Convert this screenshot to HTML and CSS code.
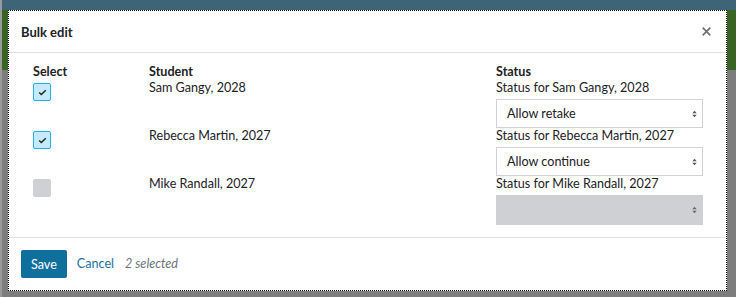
FILE: index.html
```html
<!DOCTYPE html>
<html lang="en">
<head>
    <meta charset="UTF-8">
    <title>Bulk edit</title>
    <link rel="stylesheet" href="styles.css">
</head>
<body>
    <div class="modal">
        <div class="modal-header">
            <h5>Bulk edit</h5>
            <button class="close" aria-label="Close">
                <svg width="9" height="9" viewBox="0 0 9 9"><path d="M0.7 0.7L8.3 8.3M8.3 0.7L0.7 8.3" stroke="#6a737b" stroke-width="1.7" fill="none"/></svg>
            </button>
        </div>
        <div class="modal-body">
            <div class="grid">
                <div class="th">Select</div>
                <div class="th">Student</div>
                <div class="th">Status</div>

                <div class="cell"><span class="check on"><svg width="9" height="7" viewBox="0 0 9 7"><path d="M1.2 3.6L3.3 5.5L7.8 1.2" stroke="#1d2125" stroke-width="1.4" fill="none"/></svg></span></div>
                <div class="cell name">Sam Gangy, 2028</div>
                <div class="cell">
                    <div class="label">Status for Sam Gangy, 2028</div>
                    <div class="select"><span>Allow retake</span><svg width="5" height="8" viewBox="0 0 5 8"><path d="M0.3 3.2L2.5 0.7L4.7 3.2ZM0.3 4.8L2.5 7.3L4.7 4.8Z" fill="#555"/></svg></div>
                </div>

                <div class="cell"><span class="check on"><svg width="9" height="7" viewBox="0 0 9 7"><path d="M1.2 3.6L3.3 5.5L7.8 1.2" stroke="#1d2125" stroke-width="1.4" fill="none"/></svg></span></div>
                <div class="cell name">Rebecca Martin, 2027</div>
                <div class="cell">
                    <div class="label">Status for Rebecca Martin, 2027</div>
                    <div class="select"><span>Allow continue</span><svg width="5" height="8" viewBox="0 0 5 8"><path d="M0.3 3.2L2.5 0.7L4.7 3.2ZM0.3 4.8L2.5 7.3L4.7 4.8Z" fill="#555"/></svg></div>
                </div>

                <div class="cell"><span class="check off"></span></div>
                <div class="cell name">Mike Randall, 2027</div>
                <div class="cell">
                    <div class="label">Status for Mike Randall, 2027</div>
                    <div class="select disabled"><span></span><svg width="5" height="8" viewBox="0 0 5 8"><path d="M0.3 3.2L2.5 0.7L4.7 3.2ZM0.3 4.8L2.5 7.3L4.7 4.8Z" fill="#666"/></svg></div>
                </div>
            </div>
        </div>
        <div class="modal-footer">
            <button class="btn-save">Save</button>
            <a class="cancel" href="#">Cancel</a>
            <span class="count">2 selected</span>
        </div>
    </div>
</body>
</html>
```

FILE: styles.css
```css
body {
    margin: 0;
    height: 297px;
    overflow: hidden;
    font-family: 'Lato', 'Noto Sans', sans-serif;
    font-size: 12.6px;
    color: #1d2125;
    background:
        linear-gradient(to right, #9a9a9a 0 2px, transparent 2px),
        linear-gradient(to bottom, #3e6478 0 10px, #3a6424 10px 70px, #7d7d7d 70px);
}

.modal {
    box-sizing: border-box;
    width: 719px;
    height: 281px;
    margin: 10px 0 0 8px;
    background: #fff;
    border: 1px dotted #000;
    display: flex;
    flex-direction: column;
}

.modal-header {
    height: 41px;
    display: flex;
    align-items: center;
    justify-content: space-between;
    padding: 0 15px 0 12px;
    border-bottom: 1px solid #dee2e6;
}

.modal-header h5 {
    margin: 0;
    font-size: 13px;
    font-weight: bold;
}

.close {
    border: none;
    background: none;
    padding: 0;
    width: 9px;
    height: 9px;
    display: flex;
}

.modal-body {
    padding: 11px 24px 13px;
    border-bottom: 1px solid #dee2e6;
}

.grid {
    display: grid;
    grid-template-columns: 116px 347px 207px;
}

.th {
    font-weight: bold;
    line-height: 16px;
}

.cell {
    height: 48px;
    line-height: 16px;
}

.check {
    box-sizing: border-box;
    width: 18px;
    height: 18px;
    margin-top: 3px;
    border-radius: 2px;
    display: flex;
    align-items: center;
    justify-content: center;
}

.check.on {
    background: #c4eafb;
    border: 1px solid #23b1ea;
}

.check.off {
    background: #cfd0d4;
}

.select {
    box-sizing: border-box;
    height: 29px;
    margin-top: 3px;
    border: 1px solid #cfd2d6;
    padding: 0 5px 0 10px;
    display: flex;
    align-items: center;
    justify-content: space-between;
}

.select.disabled {
    background: #cfd0d4;
    border-color: #cfd0d4;
    height: 30px;
}

.modal-footer {
    flex: 1;
    display: flex;
    align-items: flex-start;
    padding: 12px 12px 0;
}

.btn-save {
    height: 28px;
    padding: 0 10px;
    border: none;
    border-radius: 2px;
    background: #0f709d;
    color: #fff;
    font-family: inherit;
    font-size: 12.6px;
}

.cancel {
    margin-left: 10px;
    line-height: 28px;
    color: #1b6fa0;
    text-decoration: none;
}

.count {
    margin-left: 11px;
    line-height: 28px;
    font-style: italic;
    color: #6a737b;
}
```
